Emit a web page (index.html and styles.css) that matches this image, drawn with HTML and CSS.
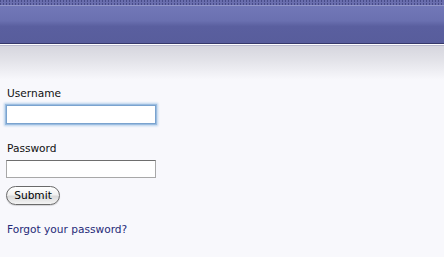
FILE: index.html
```html
<!DOCTYPE html>
<html>
<head>
<meta charset="utf-8">
<link rel="stylesheet" href="styles.css">
</head>
<body>
<div class="header">
  <div class="dots"></div>
  <div class="bar"></div>
  <div class="rule"></div>
</div>
<div class="shade"></div>
<form class="login">
  <label class="lbl" for="u">Username</label>
  <input class="field focus" id="u" type="text">
  <label class="lbl pw" for="p">Password</label>
  <input class="field" id="p" type="password">
  <button class="submit" type="button">Submit</button>
  <a class="forgot" href="#">Forgot your password?</a>
</form>
</body>
</html>
```
FILE: styles.css
```css
html, body { margin: 0; padding: 0; }
body {
  background: #f8f8fc;
  font-family: "DejaVu Sans", "Liberation Sans", sans-serif;
  font-size: 10.6px;
  color: #111;
  width: 444px;
  height: 257px;
  overflow: hidden;
}
.header { display: flex; flex-direction: column; }
.dots {
  height: 5px;
  background-color: #6a6eae;
  background-image: linear-gradient(90deg, #484c88 50%, transparent 50%);
  background-size: 3px 2px;
  background-repeat: repeat-x;
}
.dots::after {
  content: "";
  display: block;
  height: 2px;
  margin-top: 3px;
  background-image: linear-gradient(90deg, #484c88 50%, transparent 50%);
  background-size: 3px 2px;
}
.bar {
  height: 37px;
  border-top: 1px solid #9296c8;
  background: linear-gradient(#7278b8 0%, #6a70b0 40%, #5a5f9f 55%, #585d9c 100%);
}
.rule {
  height: 1px;
  background: #36386a;
  border-bottom: 1px solid #ffffff;
}
.shade {
  height: 34px;
  border-top: 1px solid #b8b8cc;
  background: linear-gradient(#d6d6de, #e2e2e8 40%, #f8f8fc 100%);
}
.login {
  display: flex;
  flex-direction: column;
  align-items: flex-start;
  padding: 7px 0 0 7px;
}
.lbl { line-height: 13px; color: #111; }
.field {
  box-sizing: border-box;
  width: 150px;
  height: 18px;
  margin: 5px 0 0 -1px;
  border: 1px solid #a8a8a8;
  border-top-color: #6e6e6e;
  background: #fff;
  padding: 0;
}
.field.focus {
  height: 19px;
  border: 1px solid #7aa3cf;
  box-shadow: 0 0 0 1px #9cbde0, 0 0 2px 2px #b9d2ec;
  outline: none;
}
.pw { margin-top: 18px; }
.submit {
  box-sizing: border-box;
  margin-top: 8px;
  margin-left: -1px;
  width: 54px;
  height: 19px;
  padding: 0;
  border: 1px solid #6a6a6a;
  border-radius: 10px;
  background: linear-gradient(#ffffff, #f2f2f2 45%, #dadada 55%, #f4f4f4);
  box-shadow: 0 1px 1px rgba(0,0,0,0.15);
  font-family: "DejaVu Sans", "Liberation Sans", sans-serif;
  font-size: 10.6px;
  color: #000;
  line-height: 15px;
}
.forgot {
  margin-top: 18px;
  line-height: 13px;
  color: #262a78;
  text-decoration: none;
}
```
